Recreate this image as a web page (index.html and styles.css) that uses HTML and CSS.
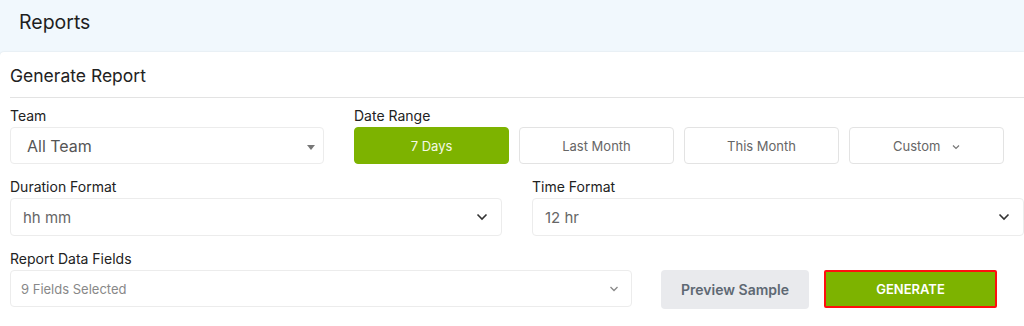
FILE: index.html
```html
<!DOCTYPE html>
<html lang="en">
<head>
    <meta charset="UTF-8">
    <meta name="viewport" content="width=device-width, initial-scale=1.0">
    <title>Reports</title>
    <link rel="stylesheet" href="styles.css">
</head>
<body>
    <div class="page-head">
        <h1>Reports</h1>
    </div>

    <div class="card">
        <h2 class="card-title">Generate Report</h2>

        <div class="row row-top">
            <div class="field">
                <label>Team</label>
                <div class="select select-team">
                    <span>All Team</span>
                    <span class="caret"></span>
                </div>
            </div>
            <div class="field">
                <label>Date Range</label>
                <div class="range">
                    <button class="range-btn active">7 Days</button>
                    <button class="range-btn">Last Month</button>
                    <button class="range-btn">This Month</button>
                    <button class="range-btn">Custom
                        <svg class="chev-sm" width="8" height="6" viewBox="0 0 8 6"><path d="M1 1.5 L4 4.5 L7 1.5" fill="none" stroke="#777" stroke-width="1.2"/></svg>
                    </button>
                </div>
            </div>
        </div>

        <div class="row row-mid">
            <div class="field">
                <label>Duration Format</label>
                <div class="select">
                    <span>hh mm</span>
                    <svg width="12" height="8" viewBox="0 0 12 8"><path d="M1.5 1.5 L6 6 L10.5 1.5" fill="none" stroke="#333" stroke-width="1.6"/></svg>
                </div>
            </div>
            <div class="field">
                <label>Time Format</label>
                <div class="select">
                    <span>12 hr</span>
                    <svg width="12" height="8" viewBox="0 0 12 8"><path d="M1.5 1.5 L6 6 L10.5 1.5" fill="none" stroke="#333" stroke-width="1.6"/></svg>
                </div>
            </div>
        </div>

        <div class="row row-bottom">
            <div class="field">
                <label>Report Data Fields</label>
                <div class="select select-fields">
                    <span>9 Fields Selected</span>
                    <svg width="10" height="6" viewBox="0 0 10 6"><path d="M1.5 1 L5 4.5 L8.5 1" fill="none" stroke="#888" stroke-width="1.3"/></svg>
                </div>
            </div>
            <div class="actions">
                <button class="btn-preview">Preview Sample</button>
                <button class="btn-generate">GENERATE</button>
            </div>
        </div>
    </div>
</body>
</html>
```

FILE: styles.css
```css
body {
    margin: 0;
    font-family: Inter, "Noto Sans", sans-serif;
    background-color: #f1f8fd;
    color: #222;
}
.page-head {
    height: 52px;
    padding-left: 19px;
    display: flex;
    align-items: center;
}
.page-head h1 {
    margin: 0;
    margin-top: -8px;
    font-size: 19.5px;
    font-weight: 400;
    color: #1f1f1f;
}
.card {
    background: #ffffff;
    border-radius: 4px 0 0 0;
    box-shadow: 0 0 2px rgba(0, 0, 0, 0.12);
    padding: 0 0 20px 10px;
    height: 274px;
    box-sizing: border-box;
}
.card-title {
    margin: 0;
    height: 42px;
    padding-top: 3px;
    line-height: 42px;
    font-size: 17.5px;
    font-weight: 400;
    color: #222;
    border-bottom: 1px solid #e3e3e3;
}
.row {
    display: flex;
    gap: 30px;
}
.row-top {
    margin-top: 8px;
}
.row-mid {
    margin-top: 13px;
}
.row-bottom {
    margin-top: 13px;
    align-items: flex-end;
}
.field label {
    display: block;
    font-size: 14px;
    color: #222;
    height: 19px;
    line-height: 19px;
    margin-bottom: 2px;
}
.select {
    box-sizing: border-box;
    height: 38px;
    border: 1px solid #ececec;
    border-radius: 4px;
    background: #fff;
    display: flex;
    align-items: center;
    justify-content: space-between;
    padding: 0 13px 0 12px;
    font-size: 15px;
    color: #666;
}
.row-top .field:first-child {
    width: 314px;
}
.select-team {
    height: 37px;
    padding: 0 8px 0 16px;
    font-size: 16px;
    color: #555;
}
.caret {
    width: 0;
    height: 0;
    border-left: 4px solid transparent;
    border-right: 4px solid transparent;
    border-top: 5px solid #777;
    margin-top: 3px;
}
.range {
    display: flex;
    gap: 10px;
}
.range-btn {
    width: 155px;
    height: 37px;
    border: 1px solid #e3e3e3;
    border-radius: 4px;
    background: #fff;
    font-family: inherit;
    font-size: 13px;
    color: #666;
    cursor: pointer;
}
.range-btn.active {
    background: #7db300;
    border-color: #7db300;
    color: #f4f9e6;
}
.chev-sm {
    margin-left: 8px;
    vertical-align: middle;
}
.row-mid .field {
    width: 492px;
}
.row-mid .field:last-child {
    width: 492px;
}
.row-bottom .field {
    width: 622px;
}
.select-fields {
    height: 37px;
    font-size: 13px;
    color: #888;
    padding: 0 12px 0 10px;
}
.actions {
    display: flex;
    gap: 15px;
    margin-left: -1px;
    margin-bottom: -2px;
}
.btn-preview {
    width: 148px;
    height: 39px;
    border: none;
    border-radius: 4px;
    background: #e9eaed;
    color: #5e6873;
    font-family: inherit;
    font-size: 14px;
    font-weight: 600;
    cursor: pointer;
}
.btn-generate {
    width: 173px;
    height: 38px;
    border: 2px solid #ff0f0f;
    border-radius: 2px;
    background: #7db300;
    color: #ffffff;
    font-family: inherit;
    font-size: 13px;
    font-weight: 600;
    cursor: pointer;
}
```
